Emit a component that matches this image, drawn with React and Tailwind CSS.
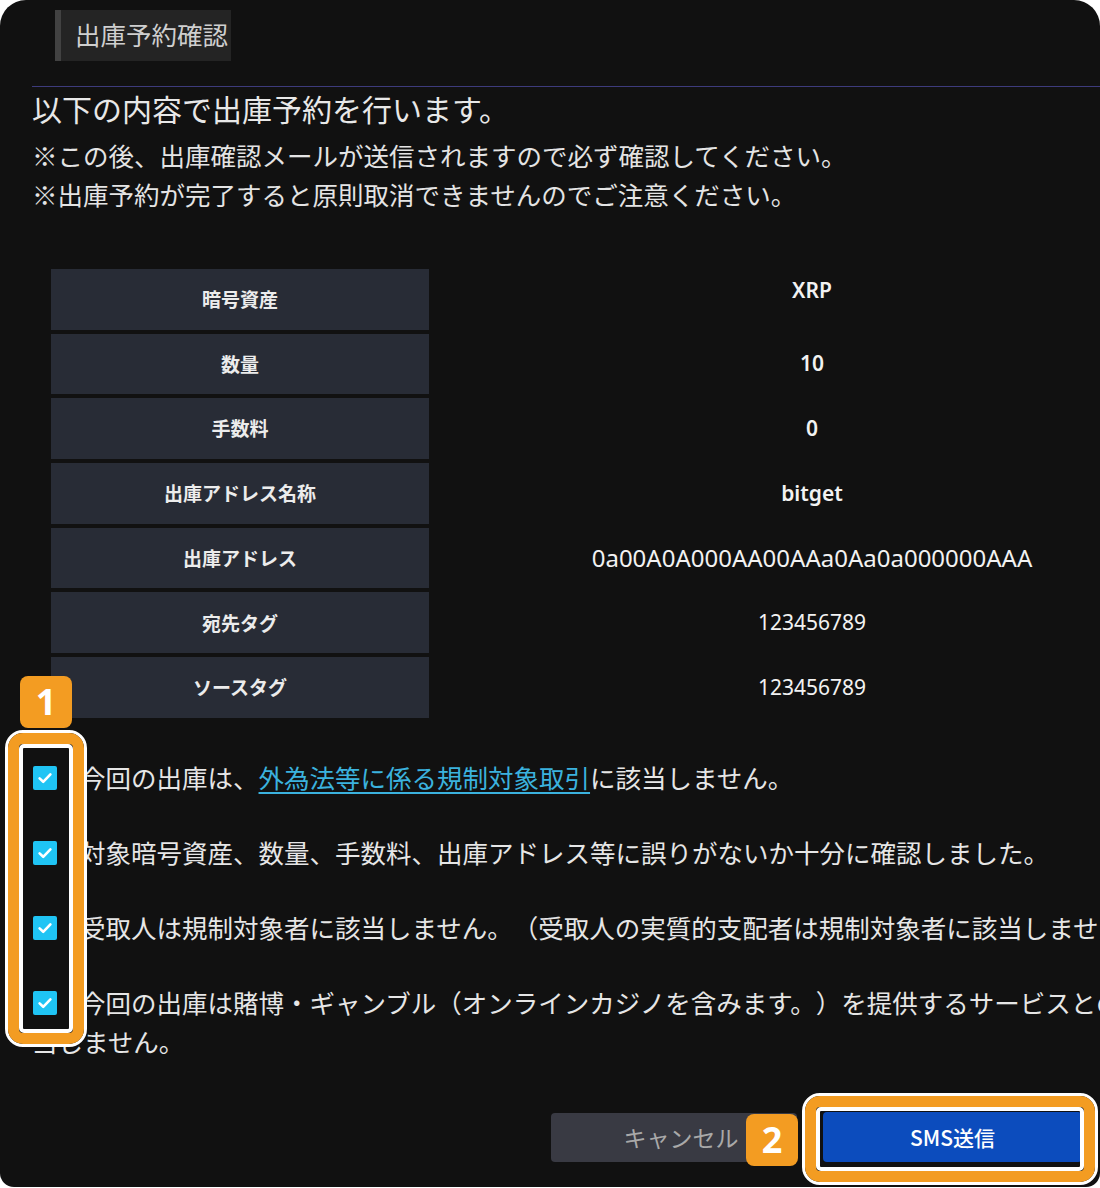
const jp = { fontFamily: '"Noto Sans CJK JP", "Noto Sans", sans-serif' };
const latin = { fontFamily: '"Noto Sans", "Noto Sans CJK JP", sans-serif' };

const rows = [
  { label: '暗号資産', value: 'XRP', kind: 'strong', lift: true },
  { label: '数量', value: '10', kind: 'strong' },
  { label: '手数料', value: '0', kind: 'strong' },
  { label: '出庫アドレス名称', value: 'bitget', kind: 'strong' },
  { label: '出庫アドレス', value: '0a00A0A000AA00AAa0Aa0a000000AAA', kind: 'addr' },
  { label: '宛先タグ', value: '123456789', kind: 'plain' },
  { label: 'ソースタグ', value: '123456789', kind: 'plain' },
];

function Check() {
  return (
    <span className="inline-block w-[24px] h-[24px] ml-[1px] mr-[23px] rounded-[2px] bg-[#1fc4f4] align-[-2px] overflow-hidden">
      <svg className="block" width="24" height="24" viewBox="0 0 24 24">
        <path d="M6.6 12.4l3.6 3.4 7.2-7.4" fill="none" stroke="#fff" strokeWidth="2.6" strokeLinecap="round" strokeLinejoin="round" />
      </svg>
    </span>
  );
}

function Badge({ n, className }) {
  return (
    <div
      className={`absolute w-[52px] h-[52px] rounded-[8px] bg-[#f39c22] flex items-center justify-center text-white text-[36px] font-bold leading-none ${className}`}
      style={latin}
    >
      {n}
    </div>
  );
}

function Frame({ className }) {
  return (
    <div className={`absolute rounded-[18px] border-[3px] border-white ${className}`}>
      <div className="w-full h-full rounded-[15px] border-[11px] border-[#f39c22]">
        <div className="w-full h-full rounded-[5px] border-[4px] border-white" />
      </div>
    </div>
  );
}

export default function App() {
  return (
    <div className="w-[1100px] h-[1188px] bg-white overflow-hidden">
      <div
        className="relative h-[1187px] bg-[#111111] rounded-t-[26px] rounded-b-[14px] overflow-hidden [text-spacing-trim:space-all]"
        style={jp}
      >
        <div className="w-[1236px] pl-[32px] pt-[10px]">
          <div className="ml-[23px] w-[176px] h-[51px] bg-[#242424] border-l-[6px] border-[#424242] pl-[14px] pb-[3px] flex items-center text-[25.5px] text-[#cfcfcf] whitespace-nowrap">
            出庫予約確認
          </div>
          <div className="mt-[25px] h-[1px] bg-[#3d3b7c]" />
          <h1 className="mt-[1px] text-[30px] leading-[40px] text-[#e8e8e8]">以下の内容で出庫予約を行います。</h1>
          <div className="mt-[8px] text-[25.5px] leading-[38.5px] text-[#e4e4e4]">
            <p>※この後、出庫確認メールが送信されますので必ず確認してください。</p>
            <p>※出庫予約が完了すると原則取消できませんのでご注意ください。</p>
          </div>

          <div className="mt-[56px] ml-[19px] w-[1144px] flex flex-col gap-[4px]">
            {rows.map((r) => (
              <div key={r.label} className="flex h-[60.7px]">
                <div className="w-[378px] bg-[#282c36] flex items-center justify-center text-[19px] font-bold text-[#ececec]">
                  {r.label}
                </div>
                <div
                  className={clsxLite(
                    'flex-1 flex items-center justify-center text-[#f2f2f2]',
                    r.kind === 'strong' && 'text-[21px] font-semibold',
                    r.kind === 'addr' && 'text-[24px]',
                    r.kind === 'plain' && 'text-[21px]',
                    r.lift && 'pb-[18px]'
                  )}
                  style={latin}
                >
                  {r.value}
                </div>
              </div>
            ))}
          </div>

          <div className="mt-[39px] text-[25.5px] leading-[39px] text-[#e6e6e6] flex flex-col gap-[36px]">
            <p>
              <Check />
              今回の出庫は、<span className="text-[#3bb2de] underline underline-offset-[4px]">外為法等に係る規制対象取引</span>に該当しません。
            </p>
            <p>
              <Check />
              対象暗号資産、数量、手数料、出庫アドレス等に誤りがないか十分に確認しました。
            </p>
            <p>
              <Check />
              受取人は規制対象者に該当しません。（受取人の実質的支配者は規制対象者に該当しません。）
            </p>
            <p>
              <Check />
              今回の出庫は賭博・ギャンブル（オンラインカジノを含みます。）を提供するサービスとの取引に該当しません。
            </p>
          </div>
        </div>

        <div className="mt-[52.5px] flex justify-end items-center gap-[26px] pr-[18px]">
          <button className="w-[246px] h-[49px] rounded-[4px] bg-[#393a43] pl-[14px] text-[23px] text-[#a9a9a9]">
            キャンセル
          </button>
          <button className="w-[259px] h-[50px] rounded-[4px] bg-[#0c4cbd] text-[21px] font-medium text-white">
            SMS送信
          </button>
        </div>

        <Frame className="left-[5px] top-[730px] w-[82px] h-[317px]" />
        <Badge n="1" className="left-[20px] top-[676px]" />
        <Frame className="left-[802px] top-[1093px] w-[296px] h-[92px]" />
        <Badge n="2" className="left-[746px] top-[1114px]" />
      </div>
    </div>
  );
}

function clsxLite(...parts) {
  return parts.filter(Boolean).join(' ');
}
